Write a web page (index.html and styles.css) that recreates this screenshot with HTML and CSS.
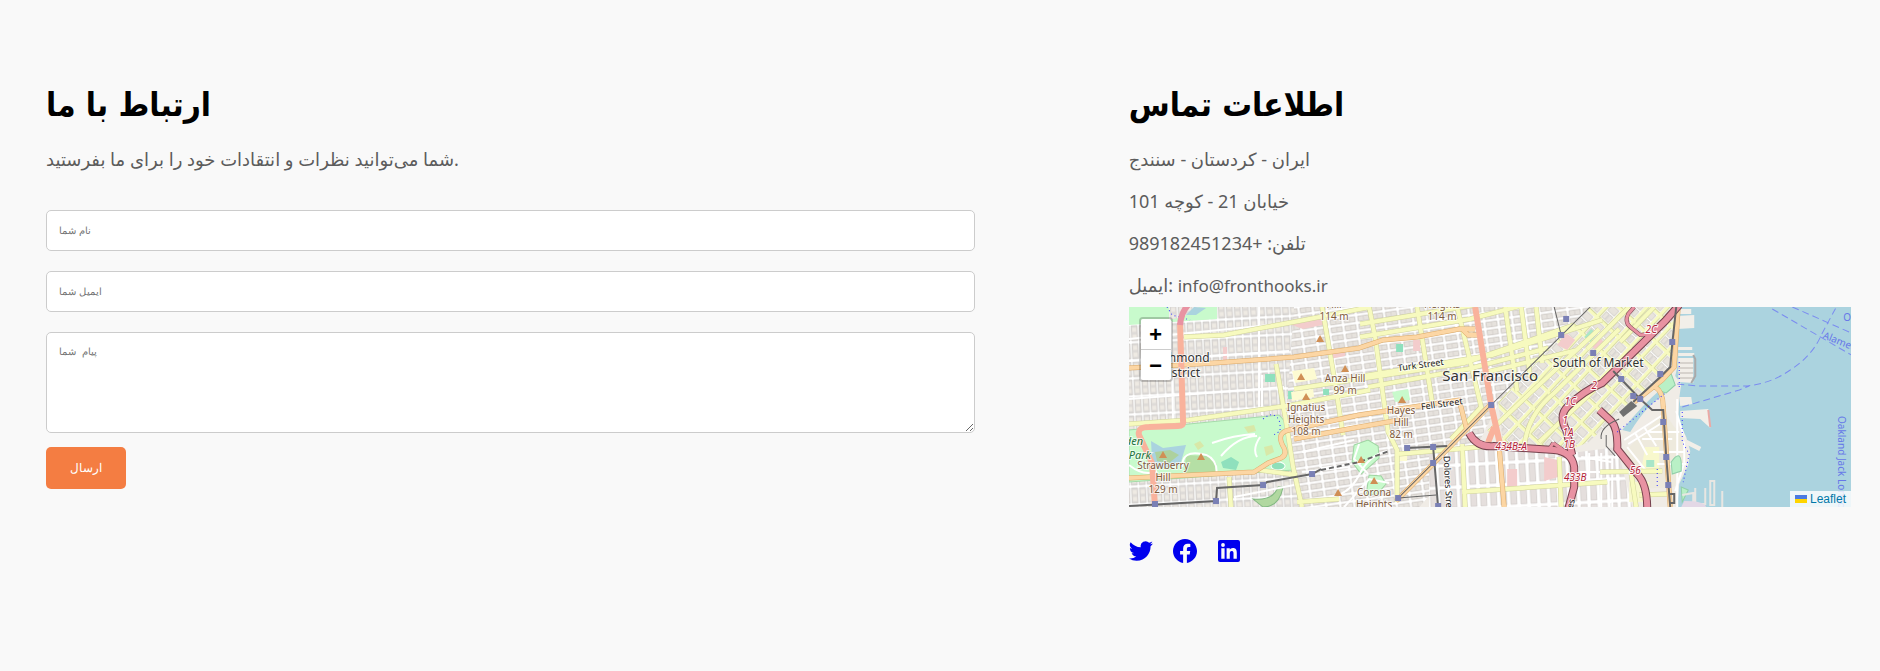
FILE: index.html
```html
<!DOCTYPE html>
<html lang="fa">
<head>
<meta charset="utf-8">
<meta name="viewport" content="width=device-width, initial-scale=1">
<title>ارتباط با ما</title>
<link rel="stylesheet" href="styles.css">
</head>
<body>
<main class="contact">
  <section class="contact-form">
    <h2 class="title">ارتباط با ما</h2>
    <p class="text">شما می‌توانید نظرات و انتقادات خود را برای ما بفرستید.</p>
    <form class="form">
      <input class="field" type="text" placeholder="نام شما" aria-label="نام شما">
      <input class="field" type="email" placeholder="ایمیل شما" aria-label="ایمیل شما">
      <textarea class="field message" placeholder="پیام  شما" aria-label="پیام شما"></textarea>
      <button class="send" type="button">ارسال</button>
    </form>
  </section>
  <section class="contact-info">
    <h2 class="title">اطلاعات تماس</h2>
    <p class="text">ایران - کردستان - سنندج</p>
    <p class="text">خیابان 21 - کوچه 101</p>
    <p class="text">تلفن: +989182451234</p>
    <p class="text">ایمیل: <span class="email">info@fronthooks.ir</span></p>
    <div class="map">
      <svg class="map-canvas" viewBox="0 0 722 200" preserveAspectRatio="xMidYMid slice" role="img" aria-label="San Francisco">
        <defs>
          <pattern id="west" width="8" height="18" patternUnits="userSpaceOnUse" patternTransform="rotate(-3)"><rect width="8" height="18" fill="#fff"/><path d="M1 1h6v15H1z" fill="#dedbd8" stroke="#c9c6c3" stroke-width=".7"/><path d="M2 3h4v4H2zM2 10h4v4H2z" fill="#eeeae3"/></pattern>
          <pattern id="mid" width="14" height="8" patternUnits="userSpaceOnUse" patternTransform="rotate(-8)"><rect width="14" height="8" fill="#fff"/><path d="M1 1h11v5H1z" fill="#e6e2dd" stroke="#c9c5c0" stroke-width=".8"/><path d="M6.500 1v5" stroke="#cfcac5" stroke-width=".6"/></pattern>
          <pattern id="soma" width="22" height="15" patternUnits="userSpaceOnUse" patternTransform="translate(3 0) rotate(-47)"><rect width="22" height="15" fill="#fff"/><path d="M0 0h22v4H0zM0 0h4v15H0z" fill="#d0d39b"/><path d="M0 0h22v3H0zM0 0h3v15H0z" fill="#f7fabf"/><path d="M5 5h7v4H5zM5 10h7v4H5zM14 5h7v9h-7z" fill="#e8e4dd" stroke="#ccc8c2" stroke-width=".7"/></pattern>
          <pattern id="mission" width="10" height="22" patternUnits="userSpaceOnUse" patternTransform="rotate(-3)"><rect width="10" height="22" fill="#fff"/><path d="M1 1h6v18H1z" fill="#e5dfdd" stroke="#cdc8c5" stroke-width=".7"/></pattern>
          <path id="peak" d="M0-4L4 3H-4z" fill="#d08f55"/>
          <path id="stop" d="M-3-3h6v6h-6z" fill="#7a80b5"/>
          <path id="avenues" d="M55 30l40-2 75-14 71-14M0 117l60-4 103-15 78-15M147 57l10 58 7 45 9 40M193 0l12 70 9 58M130 163l38 5M100 170l2 30M165 82l170-26 110-38M168 195l42-3M240 0l6 30 13 95 9 18v52M288 0l15 95M231 17l115-19M231 30l110-18 85-22M228 70l135-22 110-35M239 80l100-18 80-21M328 0l12 50 12 50-30 32M376 0l12 84M392 0l9 70M407 0l6 56M358 65l90-22M333 185l145-10M430 150l2 50M333 137l3 63M270 147l92-8M395 140q3-32 30-54l65-64M360 125l40-38 70-65M410 135l55-52M471 165l62-1M502 167l5 33M510 188l28-1M525 0l-34 35M500 0l-42 42"/>
          <path id="boulevards" d="M0 61l85-5 80-6 65-9 24-8 34-3 42-8h16M333 22l6 6h12M0 171l125-6 14-9 13-5q6-3 3-10-9-15 5-18l70-15 60-9 40-6 8 31M165 132l65-12 46-8M267 194l37-37 58-60M370 140l5 60M526 80q8 5 8 20l7 100M549 0l-4 60-12 13-28 22"/>
          <path id="freeways" d="M340 126q8 15 25 13l60 4q18 2 20 17v20l-6 22M443 148l-6-25q-8-15 2-24 15-15 34-23l63-62 14-16M470 103l12 11q7 8 6 28l20 25q10 10 10 35"/>
          <path id="ramps" d="M505 0l-6 7q-4 8 2 13l10 8 8-1 8-9M424 136l17 12M424 136l-5 8"/>
        </defs>
        <path d="M0 0h722v200H0z" fill="#abd3df"/>
        <path d="M0 0h549l-1 60-2 9 6 8-2 14-1 22 8 17 4 14-2 14-9 19-2 23H0z" fill="#f0ece6"/>
        <path d="M0 0h170v200H0z" fill="url(#west)"/>
        <path d="M165 0h296L370 95l-20 40-60 65H173l-16-90z" fill="url(#mid)"/>
        <path d="M461 0h86l-2 60-45 35-40 40-20 8-66-6-5-42z" fill="url(#soma)"/>
        <path d="M300 143l70-2 80 4 38-5 15 60H300z" fill="url(#mission)"/>
        <path d="M0 0h40v13q25-5 30-13h18v12L0 18z" fill="#c8facc"/><path d="M57 8l8-8 12 1-10 7z" fill="#aad3df"/>
        <path d="M38 0l5 8 18 5" class="path"/>
        <path d="M0 123l150-15 8 9 6 46-164 12z" fill="#c8facc" stroke="#a5dbaa"/>
        <path d="M22 134l12 7 23-3-6 20-23 4-5-10z" fill="#aad3df"/><path d="M26 145l15-2 9 5-10 8-12-2z" fill="#add19e"/>
        <path d="M57 148l24 1 7 9-1 8H55z" fill="#b5dfa5"/>
        <path d="M92 155l10-5 8 5-3 8-13-2zM136 67h10v8h-10zM159 84h5v8h-5zM194 82h6v6h-6zM267 37h7v8h-7z" fill="#8fe0bd"/>
        <ellipse cx="149" cy="159" rx="7" ry="4" fill="#8fdfb9" stroke="#fff"/>
        <path d="M115 120l10-2 2 6-8 2zM65 137l6-3 4 5-6 4zM135 140l8-2 2 7-8 4z" fill="#d8e8a8"/>
        <path d="M163 64l22-3 3 11-22 4zM162 85l22-3 1 8-22 4zM268 144h10v10h-10z" fill="#fdfbd2"/>
        <path d="M225 138l14-5 10 6 1 12-10 9-8 7-9-12zM240 168l12 1 5 8-9 10-11 1z" fill="#c8facc" stroke="#9ed5a2"/>
        <path d="M124 192q20 2 25-12h5q-4 20-20 20z" fill="#b1d8a0" stroke="#82b981"/>
        <path d="M263 85l16-3 2 11-15 2z" fill="#c8facc"/>
        <path d="M160 17l30-8 8 8-24 5zM200 48l16-4v5l-15 3zM94 40h4v18h-4zM284 33h7v11h-7zM428 38l9-12 9 7-8 10zM463 40l7-9 6 5-6 9zM415 150l14 3v17l-14 4zM378 162h10v20h-10z" fill="#f3cccc"/>
        <path d="M455 30l7-8 6 5-7 8zM500 45l5-4 3 4-4 4z" fill="#a9e6c8"/>
        <path d="M27 25l3 3 6-2M83 136q22-8 43-9M92 149q17-20 36-20M131 130q-8 12-3 20M53 160q0-17 20-13 10 1 14 12l1 10M0 158q15 12 28 6M130 0v104M42 14l2 98M133 68v40M0 92l155-12M0 54l160-10M0 32l150-15M105 190l60-12M173 125l65-8M173 145l52-12M173 165l48-5M192 161l40-5M200 190q20-2 30-22t28-24M215 200l25-28 20 4M230 137l-5 15 14 15" class="street"/>
        <path d="M490 150l45-45 10 15 10 10 2 20-12 30-35 2z" fill="#eeeadd"/>
        <path d="M516 140h14v23h-18zM500 175h20v20h-20z" fill="#f8f8cd"/><path d="M517 153h8v7h-8z" fill="#a9e6c8"/>
        <path d="M495 133l40-26M499 137l35-22M506 126l12 22M515 120l12 19M513 132h30M520 125h30M524 145h30M528 157h29M547 104l8 27v25l-9 28M498 140l20 25M548 92v110M452 150l30 5M450 165h45M460 146v54M472 146v54M483 150v50" class="street"/>
        <path d="M493 123q20-25 40-42l3 6q-18 10-35 38z" fill="#abd3df"/>
        <path d="M530 72l12-5 4 11-9 8-12-4zM542 155q9-13 10 1v8l-9 3zM552 180l7 3-6 12z" fill="#b9f0c6" stroke="#91cfa9"/>
        <path d="M550 2h12v5h-12zM548 9l17-1v13l-17 1zM549 40h14v3h-14zM549 46h16v3h-16zM549 51h15v25l-15-1zM550 90h12l1 7-12 2zM551 104l28-2 2 19-10-9-20-1zM554 125l3 10-4-1zM558 133l14 7-2 4-14-7z" fill="#f2efe9"/>
        <path d="M549 56h15M549 61h15M549 66h15M549 71h15" stroke="#bcb7b1"/><path d="M564 48l2 4v17l-4 7" fill="none" stroke="#a9a9a9" stroke-width="2"/><path d="M579 103l2 17" stroke="#eba9a5" stroke-width="2"/>
        <path d="M553 188l11-2v12M566 181v16h10v-16M581 178v20h4v-24h-4zM593 184v16" class="pier"/><path d="M555 194q20 0 22 6h-25z" fill="#e3d8e6"/>

        <use href="#avenues" class="yellow-case"/><use href="#avenues" class="yellow"/>
        <use href="#boulevards" class="orange-case"/><use href="#boulevards" class="orange"/>
        <path d="M51 16l3 98q1 5-5 5l-29 1q-12 0-10 8l13 28 3 44M346 0l16 98 9 40M365 120l-7 18" class="trunk"/>
        <path d="M59-2q-7 8-8 20" class="motorway"/>
        <use href="#ramps" class="ramp-case"/><use href="#freeways" class="motorway-case"/>
        <use href="#ramps" class="ramp"/><use href="#freeways" class="motorway"/>
        <path d="M490 105l12-11 6 5-14 11z" fill="#707070"/><path d="M472 132q-2-12 18-20M477 128v11l9 10" class="rail thin"/>
        <path d="M461 0l-99 98-58 58-37 37M425 0l7 28M269 191l38-3" class="rail thin"/>
        <path d="M0 199l87-5 1-13 46-3 4-3 45-8 9-5M278 141l40-2M304 140l5 60M484 64l27 28 12 11h11l3 47 4 50M547 0l-4 37-2 23-10 10-27 25M541 187h4v9h-4" class="rail"/>
        <path d="M192 163l38-8 30-11" class="rail tunnel"/>
        <path d="M488 125l47-38M550 55v28M553 105v30l7 12-6 28M134 112q12-10 17 4v8l-8 5M528 162v20" class="path"/>
        <path d="M548 77l20 2h50q25-3 43-16 22-14 31-35L707 0M553 100l57-17 10-4M643 2l79 46M663 0l59 26" class="ferry"/>
        <g><use href="#peak" x="191" y="32"/><use href="#peak" x="172" y="70"/><use href="#peak" x="216" y="62"/><use href="#peak" x="177" y="90"/><use href="#peak" x="34" y="148"/><use href="#peak" x="72" y="150"/><use href="#peak" x="232" y="153"/><use href="#peak" x="209" y="186"/><use href="#peak" x="273" y="93"/><use href="#peak" x="245" y="174"/></g>
        <g><use href="#stop" x="26" y="197"/><use href="#stop" x="87" y="194"/><use href="#stop" x="134" y="178"/><use href="#stop" x="183" y="167"/><use href="#stop" x="278" y="141"/><use href="#stop" x="304" y="140"/><use href="#stop" x="304" y="156"/><use href="#stop" x="269" y="191"/><use href="#stop" x="309" y="199"/><use href="#stop" x="362" y="98"/><use href="#stop" x="432" y="28"/><use href="#stop" x="437" y="12"/><use href="#stop" x="464" y="46"/><use href="#stop" x="543" y="35"/><use href="#stop" x="531" y="67"/><use href="#stop" x="492" y="72"/><use href="#stop" x="504" y="89"/><use href="#stop" x="511" y="92"/><use href="#stop" x="534" y="115"/><use href="#stop" x="537" y="150"/><use href="#stop" x="539" y="178"/></g>
        <g class="label hill">
          <text x="205" y="1">Hill</text><text x="205" y="13">114 m</text>
          <text x="313" y="1">Heights</text><text x="313" y="13">114 m</text>
          <text x="216" y="75">Anza Hill</text><text x="216" y="87">99 m</text>
          <text x="177" y="104">Ignatius</text><text x="177" y="116">Heights</text><text x="177" y="128">108 m</text>
          <text x="34" y="162">Strawberry</text><text x="34" y="174">Hill</text><text x="34" y="186">129 m</text>
          <text x="272" y="107">Hayes</text><text x="272" y="119">Hill</text><text x="272" y="131">82 m</text>
          <text x="245" y="189">Corona</text><text x="245" y="201">Heights</text>
        </g>
        <g class="label park"><text x="14" y="138">Golden</text><text x="22" y="152">Gate Park</text></g>
        <g class="label place"><text x="52" y="55">Richmond</text><text x="51" y="70">District</text><text x="469" y="60">South of Market</text></g>
        <text x="361" y="74" class="label city">San Francisco</text>
        <g class="label road"><text transform="translate(292 61) rotate(-8)">Turk Street</text><text transform="translate(313 100) rotate(-8)">Fell Street</text><text transform="translate(316 179) rotate(87)">Dolores Street</text><text transform="translate(443 205) rotate(-78)">James</text></g>
        <g class="label exit"><text x="522" y="26">2C</text><text x="465" y="82">2</text><text x="441" y="98">1C</text><text x="436" y="117">1</text><text x="439" y="129">1A</text><text x="440" y="141">1B</text><text x="382" y="143">434B-A</text><text x="446" y="174">433B</text><text x="506" y="167">56</text></g>
        <g class="label sea"><text x="714" y="14">O</text><text transform="translate(693 31) rotate(22)">Alameda</text><text transform="translate(709 109) rotate(90)">Oakland Jack London</text></g>
      </svg>
      <div class="zoom"><button class="zoom-button" type="button" aria-label="Zoom in">+</button><button class="zoom-button" type="button" aria-label="Zoom out">−</button></div>
      <div class="attribution"><a class="leaflet" href="#"><svg class="flag" viewBox="0 0 12 8" aria-hidden="true"><path fill="#4c7be1" d="M0 0h12v4H0z"/><path fill="#ffd500" d="M0 4h12v4H0z"/></svg>Leaflet</a></div>
    </div>
    <nav class="social">
      <a href="#" aria-label="Twitter"><svg class="icon" viewBox="0 0 24 24"><path d="M23.950 4.570a10 10 0 0 1-2.820.770 4.960 4.960 0 0 0 2.160-2.720c-.950.550-2 .950-3.130 1.180a4.920 4.920 0 0 0-8.380 4.480C7.690 8.100 4.070 6.130 1.640 3.160a4.920 4.920 0 0 0 1.520 6.570 4.900 4.900 0 0 1-2.230-.610v.060a4.920 4.920 0 0 0 3.950 4.830 5 5 0 0 1-2.210.080 4.940 4.940 0 0 0 4.600 3.420A9.870 9.870 0 0 1 0 19.540a14 14 0 0 0 7.550 2.210c9.050 0 14-7.500 14-13.980 0-.210 0-.420-.020-.630a9.940 9.940 0 0 0 2.420-2.570z"/></svg></a>
      <a href="#" aria-label="Facebook"><svg class="icon" viewBox="0 0 24 24"><path d="M24 12.070C24 5.450 18.630 0 12 0S0 5.450 0 12.070c0 6 4.390 10.980 10.130 11.930v-8.440H7.080v-3.490h3.050V9.410c0-3.020 1.790-4.700 4.530-4.700 1.310 0 2.690.240 2.690.240v2.970h-1.510c-1.500 0-1.960.930-1.960 1.890v2.260h3.320l-.530 3.490h-2.790V24C19.610 23.050 24 18.070 24 12.070z"/></svg></a>
      <a href="#" aria-label="LinkedIn"><svg class="icon" viewBox="0 0 24 24"><path fill-rule="evenodd" d="M3 1h18q2 0 2 2v18q0 2-2 2H3q-2 0-2-2V3q0-2 2-2zm1.300 8.300v10.500h3.300V9.300zM6 4.100a1.900 1.900 0 1 0 0 3.800 1.900 1.900 0 0 0 0-3.800zm3.600 5.200v10.500h3.200v-5.200c0-1.400.3-2.700 2-2.700s1.700 1.500 1.700 2.800v5.100h3.300V14c0-2.800-.6-5-3.900-5-1.600 0-2.600.9-3.100 1.700V9.300z"/></svg></a>
    </nav>
  </section>
</main>
</body>
</html>
```
FILE: styles.css
```css
* { box-sizing: border-box; }
body { margin: 0; background: #f9f9f9; font-family: "Noto Sans", "DejaVu Sans", sans-serif; color: #000; }
.contact { display: grid; grid-template-columns: 9fr 7fr; gap: 154px; padding: 78px 29px 78px 46px; }
.title { margin: 0; font: 700 33px/54px "DejaVu Sans Condensed", "DejaVu Sans", sans-serif; }
.text { margin: 0; padding: 6px 0; font-size: 18px; line-height: 30px; color: #5c5c5c; }
.title + .text { margin-top: 6px; }
.email { font-size: 17px; }
.form { display: flex; flex-direction: column; align-items: flex-start; gap: 20px; margin-top: 30px; }
.field { display: block; width: 100%; height: 41px; padding: 12px; border: 1px solid #ccc; border-radius: 5px; background: #fff; font: 10px/14px "Liberation Sans", Arial, sans-serif; }
.field::placeholder { color: #757575; }
.message { height: 101px; resize: vertical; }
.send { height: 42px; margin-top: -6px; padding: 0 24px; border: 0; border-radius: 5px; background: #f47d42; color: #fff; font: 12px "Liberation Sans", Arial, sans-serif; }
.map { position: relative; height: 200px; overflow: hidden; background: #ddd; }
.map-canvas { display: block; width: 100%; height: 100%; }
.street { fill: none; stroke: #fff; stroke-width: 2; }
.pier { fill: none; stroke: #e8e6e2; stroke-width: 2; }
.path { fill: none; stroke: #3030ff; stroke-width: 1; stroke-dasharray: 1 3; }
.yellow-case { fill: none; stroke: #d0d39b; stroke-width: 5; }
.yellow { fill: none; stroke: #f7fabf; stroke-width: 4; }
.orange-case { fill: none; stroke: #dcaa68; stroke-width: 5; }
.orange { fill: none; stroke: #fcd6a4; stroke-width: 4; }
.trunk { fill: none; stroke: #f9b29c; stroke-width: 6; stroke-linejoin: round; }
.motorway-case { fill: none; stroke: #74424d; stroke-width: 8; }
.motorway { fill: none; stroke: #e892a2; stroke-width: 6; }
.ramp-case { fill: none; stroke: #74424d; stroke-width: 4; }
.ramp { fill: none; stroke: #e892a2; stroke-width: 3; }
.rail { fill: none; stroke: #666; stroke-width: 2; }
.rail.thin { stroke-width: 1; }
.tunnel { stroke-dasharray: 5 3; }
.ferry { fill: none; stroke: #7b8cf0; stroke-width: 1; stroke-dasharray: 7 4; }
.label { font-family: "Noto Sans", sans-serif; text-anchor: middle; paint-order: stroke; stroke: #ffffffb3; stroke-width: 2px; }
.hill { font-size: 10px; fill: #805b40; }
.park { font-size: 11px; font-style: italic; fill: #20733b; text-anchor: end; }
.place { font-size: 12px; fill: #333; }
.city { font-size: 15px; fill: #333; }
.road { font-size: 9px; fill: #222; }
.exit { font-size: 10px; font-style: italic; fill: #b51f38; stroke: #fffffff0; }
.sea { font-size: 10px; fill: #6677e8; stroke: none; text-anchor: start; }
.zoom { position: absolute; top: 10px; left: 10px; display: flex; flex-direction: column; border: 2px solid #0003; border-radius: 4px; background-clip: padding-box; }
.zoom-button { width: 30px; height: 31px; padding: 6px 0 0; border: 0; border-bottom: 1px solid #ccc; border-radius: 2px 2px 0 0; background: #fff; color: #000; font: bold 22px/24px "Liberation Mono", monospace; }
.zoom-button:last-child { height: 30px; border-bottom: 0; border-radius: 0 0 2px 2px; }
.attribution { position: absolute; right: 0; bottom: 0; padding: 0 5px; background: #fffc; font: 12px/16px "Liberation Sans", Arial, sans-serif; }
.leaflet { display: flex; align-items: center; gap: 3px; color: #0078a8; text-decoration: none; }
.flag { width: 12px; height: 8px; }
.social { display: flex; gap: 20px; margin-top: 32px; }
.icon { display: block; width: 24px; height: 24px; fill: #00e; }
```
